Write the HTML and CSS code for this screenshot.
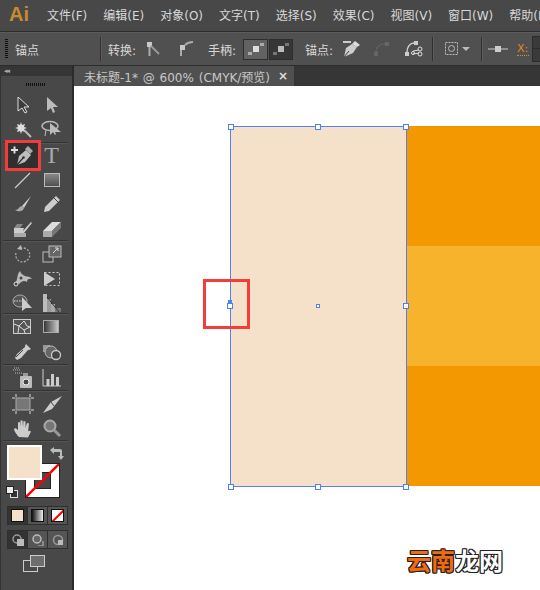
FILE: index.html
```html
<!DOCTYPE html>
<html lang="zh">
<head>
<meta charset="utf-8">
<title>Illustrator</title>
<link rel="stylesheet" href="styles.css">
</head>
<body>
<div class="app">
  <header class="menubar">
    <span class="logo">Ai</span>
    <nav class="menus">
      <span>文件(F)</span><span>编辑(E)</span><span>对象(O)</span><span>文字(T)</span><span>选择(S)</span><span>效果(C)</span><span>视图(V)</span><span>窗口(W)</span><span>帮助(H)</span>
    </nav>
  </header>

  <div class="controlbar">
    <span class="grip"></span>
    <span class="ctl-title">锚点</span>
    <span class="vsep first"></span>
    <span class="ctl-label">转换:</span>
    <svg class="ctl-icon i1" width="18" height="18" viewBox="0 0 18 18"><rect x="3" y="2" width="5" height="5" fill="#c8c8c8"/><path d="M5.500 7V16" stroke="#aaa" stroke-width="2"/><path d="M7 6l8 8" stroke="#999" stroke-width="2"/></svg>
    <svg class="ctl-icon i2" width="18" height="18" viewBox="0 0 18 18"><rect x="3" y="5" width="5" height="5" fill="#c8c8c8"/><path d="M4 16V10" stroke="#aaa" stroke-width="2"/><path d="M8 5C10 3 13 2 16 2" stroke="#aaa" stroke-width="2" fill="none"/></svg>
    <span class="ctl-label hand">手柄:</span>
    <span class="toggle on"><svg width="16" height="14" viewBox="0 0 16 14"><rect x="5" y="4" width="6" height="6" fill="#ddd"/><rect x="0" y="10" width="4" height="3" fill="#aaa"/><rect x="12" y="1" width="4" height="3" fill="#aaa"/></svg></span>
    <span class="toggle off"><svg width="16" height="14" viewBox="0 0 16 14"><rect x="5" y="4" width="6" height="6" fill="#bbb"/><rect x="0" y="10" width="4" height="3" fill="#777"/><rect x="12" y="1" width="4" height="3" fill="#777"/></svg></span>
    <span class="ctl-label anchor">锚点:</span>
    <svg class="ctl-icon i3" width="20" height="18" viewBox="0 0 20 18"><path d="M2 17l2-9 6-4 5 3-4 6z" fill="#ccc"/><path d="M13 1l5 4-3 2-5-3z" fill="#ddd"/><path d="M2 17l5-6" stroke="#444"/><path d="M1 2h8" stroke="#ccc" stroke-width="2"/></svg>
    <svg class="ctl-icon i4" width="18" height="18" viewBox="0 0 18 18"><rect x="1" y="12" width="4" height="4" fill="#666"/><rect x="12" y="2" width="4" height="4" fill="#666"/><path d="M3 12C3 7 7 4 12 4" stroke="#666" stroke-width="1.500" stroke-dasharray="2 1" fill="none"/></svg>
    <svg class="ctl-icon i5" width="20" height="18" viewBox="0 0 20 18"><rect x="1" y="12" width="4" height="4" fill="#ccc"/><rect x="10" y="1" width="4" height="4" fill="#ccc"/><path d="M3 12C3 7 6 3 10 3" stroke="#ccc" stroke-width="1.500" fill="none"/><circle cx="9" cy="13" r="1.500" fill="none" stroke="#ddd"/><circle cx="16" cy="14" r="2" fill="none" stroke="#ddd"/><circle cx="16" cy="9" r="2" fill="none" stroke="#ddd"/><path d="M9 11l6-1M9 14l6-1" stroke="#ddd"/></svg>
    <span class="vsep second"></span>
    <svg class="ctl-icon i6" width="30" height="14" viewBox="0 0 30 14"><rect x=".5" y=".5" width="12" height="12" fill="none" stroke="#bbb" stroke-dasharray="2 1"/><circle cx="6.500" cy="6.500" r="3" fill="none" stroke="#bbb"/><path d="M17 5h8l-4 4z" fill="#bbb"/></svg>
    <span class="vsep third"></span>
    <svg class="ctl-icon i7" width="20" height="8" viewBox="0 0 20 8"><path d="M0 4h20" stroke="#ccc"/><rect x="7" y="1" width="6" height="6" fill="#ccc"/></svg>
    <span class="xlabel">X:</span>
    <span class="spinner"><i></i></span>
  </div>

  <div class="workspace">
    <aside class="toolpanel">
      <div class="panel-head"><span class="arrows">◂◂</span></div>
      <div class="panel-grip"></div>

      <div class="tools g1">
        <svg width="20" height="20" viewBox="0 0 20 20"><path d="M5 2v14l4-3 3 5 2-1-3-5h5z" fill="#3b3b3b" stroke="#ddd"/></svg>
        <svg class="more" width="20" height="20" viewBox="0 0 20 20"><path d="M5 2v14l4-3 2 5 2-1-2-5h5z" fill="#bbb"/></svg>
        <svg width="22" height="20" viewBox="0 0 22 20"><path d="M9 3l1 3 3-1-1 3 3 1-3 1 1 3-3-1-1 3-1-3-3 1 1-3-3-1 3-1-1-3 3 1z" fill="#ddd"/><path d="M12 11l7 7" stroke="#bbb" stroke-width="2"/></svg>
        <svg class="more" width="22" height="20" viewBox="0 0 22 20"><ellipse cx="9" cy="7" rx="8" ry="4.500" fill="none" stroke="#bbb" stroke-width="1.500"/><path d="M9 4v12l3-3 2 3 1-1-1-2h6z" fill="#bbb"/><path d="M5 11l-1 6" stroke="#bbb"/></svg>
      </div>

      <div class="tools g2">
        <span class="tool-active"><svg width="26" height="22" viewBox="0 0 26 22"><path d="M1 6h7M4.500 2.500v7" stroke="#ddd" stroke-width="2"/><path d="M7 21l2-9 7-6 5 5-6 7z" fill="#bdbdbd"/><path d="M15 5l3-3 5 5-3 3z" fill="#aaa"/><path d="M7 21l6-7" stroke="#2f2f2f" stroke-width="1.200"/><circle cx="13.500" cy="13.500" r="1.300" fill="#2f2f2f"/></svg></span>
        <span class="type-tool">T</span>
        <svg class="more" width="20" height="20" viewBox="0 0 20 20"><path d="M2 18L17 3" stroke="#ccc" stroke-width="1.200"/></svg>
        <svg class="more" width="16" height="14" viewBox="0 0 16 14"><defs><linearGradient id="rg" x1="0" y1="0" x2="0" y2="1"><stop offset="0" stop-color="#8a8a8a"/><stop offset="1" stop-color="#4f4f4f"/></linearGradient></defs><rect x=".5" y=".5" width="15" height="13" fill="url(#rg)" stroke="#bbb"/></svg>
        <svg width="20" height="20" viewBox="0 0 20 20"><path d="M18 2L9 12l2 2z" fill="#ccc"/><path d="M9 12c-3 0-3 4-7 4 3 2 8 2 9-2z" fill="#aaa"/></svg>
        <svg class="more" width="20" height="20" viewBox="0 0 20 20"><path d="M14 2l4 4L7 17l-5 1 1-5z" fill="#ccc"/><path d="M12 4l4 4" stroke="#444"/></svg>
        <svg width="22" height="20" viewBox="0 0 22 20"><path d="M2 9h10l-1 3 8-9 1 1-8 10H2z" fill="#ccc"/><path d="M2 9l3-4h6l-3 4z" fill="#888"/><path d="M2 14h12v4H2z" fill="#aaa"/></svg>
        <svg class="more" width="22" height="20" viewBox="0 0 22 20"><path d="M2 12l9-9h9l-9 9z" fill="#ddd"/><path d="M2 12h9v6H2z" fill="#aaa"/><path d="M11 12l9-9v6l-9 9z" fill="#777"/></svg>
      </div>

      <div class="tools g3">
        <svg class="more" width="20" height="20" viewBox="0 0 20 20"><path d="M3 9a7 7 0 1 0 3-4" fill="none" stroke="#aaa" stroke-width="1.300" stroke-dasharray="2 1.500"/><path d="M8 1L4 5l5 1z" fill="#bbb"/></svg>
        <svg class="more" width="20" height="20" viewBox="0 0 20 20"><rect x="1" y="8" width="10" height="10" fill="none" stroke="#bbb"/><rect x="7" y="2" width="12" height="11" fill="#666" stroke="#bbb"/><path d="M11 9l5-5M13 4h3v3" stroke="#ddd" fill="none"/></svg>
        <svg class="more" width="22" height="20" viewBox="0 0 22 20"><path d="M4 13C6 9 5 5 8 2c1 3 3 4 5 5s5 0 7 3c-3-1-5 0-5 3-3-2-5-1-8 2" fill="#bbb"/><circle cx="4" cy="15" r="2" fill="none" stroke="#ddd"/><circle cx="9" cy="9" r="1.500" fill="#444"/></svg>
        <svg width="20" height="20" viewBox="0 0 20 20"><rect x="2.500" y="3.500" width="15" height="13" fill="none" stroke="#ccc" stroke-dasharray="2 2"/><path d="M2 3l11 7-11 7z" fill="#ccc"/></svg>
        <svg width="22" height="20" viewBox="0 0 22 20"><ellipse cx="8" cy="8" rx="7" ry="6" fill="#555" stroke="#aaa"/><path d="M2 8h9" stroke="#ddd" stroke-dasharray="1.500 1"/><path d="M10 4v14l4-3h6z" fill="#ccc"/></svg>
        <svg class="more" width="22" height="20" viewBox="0 0 22 20"><path d="M2 1h4v18H2z" fill="#bbb"/><path d="M6 6h4v13H6z" fill="#999"/><path d="M10 11h4v8h-4z" fill="#aaa"/><path d="M14 15h6v4h-6z" fill="#777"/><path d="M6 4l12 15" stroke="#333" fill="none"/></svg>
      </div>

      <div class="tools g4">
        <svg width="20" height="18" viewBox="0 0 20 18"><rect x=".5" y="1.500" width="17" height="14" fill="#555" stroke="#ccc"/><path d="M1 6l5 2 5-5 3 5 3 1M6 8l-1 7M6 8l5 4 1 3M11 12l6-3" stroke="#ddd" fill="none"/></svg>
        <svg width="18" height="14" viewBox="0 0 18 14"><defs><linearGradient id="gg"><stop offset="0" stop-color="#333"/><stop offset="1" stop-color="#ccc"/></linearGradient></defs><rect x=".5" y=".5" width="15" height="12" fill="url(#gg)" stroke="#aaa"/></svg>
        <svg class="more" width="20" height="20" viewBox="0 0 20 20"><path d="M13 2l5 5-2 1-1 0-7 8-4 2-2-2 2-4 8-7 0-1z" fill="#ccc"/><path d="M3 15l7-7" stroke="#444"/></svg>
        <svg width="22" height="20" viewBox="0 0 22 20"><rect x="2" y="3" width="7" height="7" fill="#999"/><circle cx="10" cy="10" r="6" fill="#666" stroke="#bbb"/><circle cx="15" cy="13" r="4.500" fill="#444" stroke="#ccc" stroke-width="1.300"/></svg>
      </div>

      <div class="tools g5">
        <svg class="more" width="22" height="22" viewBox="0 0 22 22"><path d="M1 3h8M3 6h8M2 1h6" stroke="#bbb" stroke-dasharray="1 1"/><rect x="8" y="9" width="12" height="12" rx="1" fill="#bbb"/><circle cx="14" cy="15" r="3" fill="#444" stroke="#eee"/><rect x="11" y="6" width="5" height="3" fill="#999"/></svg>
        <svg class="more" width="20" height="20" viewBox="0 0 20 20"><path d="M1 1v17h18" stroke="#ccc" fill="none"/><path d="M4.500 11h3v7h-3zM9 6h3v12H9zM14 9h3v9h-3z" fill="#ccc"/></svg>
      </div>

      <div class="tools g6">
        <svg width="22" height="20" viewBox="0 0 22 20"><rect x="4" y="4" width="14" height="12" fill="#777" stroke="#aaa"/><path d="M0 4h3M19 4h3M0 16h3M19 16h3M4 0v3M18 0v3M4 17v3M18 17v3" stroke="#ddd"/></svg>
        <svg class="more" width="20" height="20" viewBox="0 0 20 20"><path d="M20 2L9 8 1 19l9-4z" fill="#ccc"/><path d="M9 8l3 4" stroke="#444"/></svg>
        <svg class="more" width="20" height="20" viewBox="0 0 20 20"><path d="M6 18c-2-2-5-6-5-8l1.500-1L5 11V3.500l2-.5.500 5V1.500h2L10 8l.5-6 2 .5L12.500 9l1.500-5 2 .5-1 8 1-1 2 1-3 6z" fill="#ccc"/></svg>
        <svg width="20" height="20" viewBox="0 0 20 20"><circle cx="8" cy="7" r="5.500" fill="#777" stroke="#aaa" stroke-width="2"/><path d="M12 11l6 6" stroke="#999" stroke-width="3"/></svg>
      </div>

      <div class="colors">
        <span class="swap"><svg width="16" height="14" viewBox="0 0 16 14"><path d="M1 3l4-3v2h6a2 2 0 0 1 2 2v5h2l-3 4-3-4h2V5H5v2z" fill="#bbb"/></svg></span>
        <div class="swatches">
          <span class="stroke-swatch"><span class="stroke-hole"></span><svg class="slash" viewBox="0 0 34 34" preserveAspectRatio="none"><path d="M0 34L34 0" stroke="#f00" stroke-width="2.500"/></svg></span>
          <span class="fill-swatch"></span>
          <span class="defaults"><i class="d-back"></i><i class="d-front"></i></span>
        </div>
      </div>

      <div class="mode-row">
        <span class="mode active"><i class="m-fill"></i></span>
        <span class="mode"><i class="m-grad"></i></span>
        <span class="mode"><i class="m-none"><svg viewBox="0 0 12 12" width="12" height="12"><path d="M0 12L12 0" stroke="#f00" stroke-width="2"/></svg></i></span>
      </div>

      <div class="mode-row draw">
        <span class="mode active"><svg width="12" height="12" viewBox="0 0 12 12"><circle cx="5" cy="5" r="4" fill="none" stroke="#999" stroke-width="1.500"/><rect x="5" y="5" width="7" height="7" fill="#bbb"/></svg></span>
        <span class="mode"><svg width="12" height="12" viewBox="0 0 12 12"><circle cx="5" cy="5" r="4" fill="#666" stroke="#bbb" stroke-width="1.500"/><path d="M11 7v5H6" stroke="#bbb" fill="none"/></svg></span>
        <span class="mode"><svg width="12" height="12" viewBox="0 0 12 12"><circle cx="6" cy="6" r="4.500" fill="none" stroke="#999" stroke-width="1.500"/><rect x="6" y="6" width="5" height="5" fill="#bbb"/></svg></span>
      </div>

      <div class="screen-mode"><svg width="22" height="17" viewBox="0 0 22 17"><rect x=".5" y="5.500" width="14" height="11" fill="#4a4a4a" stroke="#ccc"/><rect x="7.500" y=".5" width="14" height="11" fill="#6e6e6e" stroke="#ccc"/></svg></div>
    </aside>

    <main class="document">
      <div class="tabbar">
        <div class="tab"><span>未标题-1* @ 600% (CMYK/预览)</span><b class="close">×</b></div>
      </div>
      <div class="canvas">
        <svg class="art" width="466" height="504" viewBox="0 0 466 504">
          <rect x="333" y="40" width="133" height="120" fill="#f39800"/>
          <rect x="333" y="160" width="133" height="120" fill="#f8b32c"/>
          <rect x="333" y="280" width="133" height="120" fill="#f39800"/>
          <rect x="156.500" y="40.500" width="176" height="360" fill="#f5e1ca" stroke="#5580ee"/>
          <g fill="#fff" stroke="#4f7ff0">
            <rect x="154.500" y="38.500" width="5" height="5"/><rect x="241.500" y="38.500" width="5" height="5"/><rect x="329.500" y="38.500" width="5" height="5"/>
            <rect x="329.500" y="217.500" width="5" height="5"/><rect x="154.500" y="398.500" width="5" height="5"/><rect x="241.500" y="398.500" width="5" height="5"/><rect x="329.500" y="398.500" width="5" height="5"/>
            <rect x="242.500" y="218.500" width="3" height="3"/><rect x="153.500" y="217.500" width="5" height="5"/>
          </g>
          <rect x="154" y="214" width="4" height="3" fill="#4f7ff0"/>
          <rect x="130.500" y="194.500" width="44" height="47" fill="none" stroke="#f43c3c" stroke-width="3"/>
        </svg>
        <div class="watermark"><em>云南</em>龙网</div>
      </div>
    </main>
  </div>
</div>
</body>
</html>
```

FILE: styles.css
```css
* { box-sizing: border-box; }
html, body { margin: 0; height: 100%; overflow: hidden; }
body { background: #484848; }
.app {
  width: 540px; height: 590px; display: flex; flex-direction: column;
  font-family: "DejaVu Sans", "Noto Sans CJK SC", sans-serif;
  font-size: 12px; color: #d8d8d8; background: #484848; overflow: hidden;
}

/* menu */
.menubar { height: 32px; flex: none; display: flex; align-items: center; background: #484848; border-bottom: 1px solid #2c2c2c; white-space: nowrap; overflow: hidden; }
.logo { width: 47px; padding-left: 9px; font: bold 20px "Liberation Sans", sans-serif; color: #c98a2e; position: relative; top: -1px; flex: none; }
.menus { display: flex; gap: 16px; flex: none; }
.menus span { display: block; line-height: 16px; }

/* control bar */
.controlbar { height: 34px; flex: none; display: flex; align-items: center; background: #505050; border-bottom: 1px solid #2c2c2c; border-top: 1px solid #5c5c5c; white-space: nowrap; padding-left: 5px; }
.grip { width: 3px; height: 20px; flex: none; background: repeating-linear-gradient(#111 0 1px, transparent 1px 2px); }
.ctl-title { margin-left: 7px; width: 85px; flex: none; }
.vsep { width: 1px; height: 24px; background: #303030; box-shadow: 1px 0 0 #5c5c5c; flex: none; }
.ctl-label { flex: none; width: 29px; }
.controlbar .first + .ctl-label { margin-left: 7px; }
.ctl-icon { flex: none; display: block; }
.i1 { margin-left: 7px; }
.i2 { margin-left: 15px; }
.hand { margin-left: 13px; }
.toggle { height: 21px; flex: none; display: flex; align-items: center; justify-content: center; }
.toggle.on { width: 25px; margin-left: 6px; background: #626262; border: 1px solid #2e2e2e; }
.toggle.off { width: 24px; margin-left: 1px; background: #363636; border: 1px solid #2e2e2e; }
.anchor { margin-left: 12px; }
.i3 { margin-left: 8px; }
.i4 { margin-left: 11px; }
.i5 { margin-left: 13px; }
.second { margin-left: 8px; }
.i6 { margin-left: 12px; }
.third { margin-left: 6px; }
.i7 { margin-left: 6px; }
.xlabel { margin-left: 9px; color: #e08a1e; border-bottom: 1px dotted #e08a1e; line-height: 13px; flex: none; width: 12px; font-size: 11px; }
.spinner { margin-left: 3px; width: 20px; height: 26px; flex: none; background: #3a3a3a; border: 1px solid #2c2c2c; position: relative; }
.spinner i { display: block; height: 12px; border-bottom: 1px solid #2c2c2c; }

/* workspace */
.workspace { flex: 1; min-height: 0; display: flex; }
.toolpanel { width: 74px; flex: none; background: #484848; border-right: 2px solid #2b2b2b; border-left: 1px solid #333; display: flex; flex-direction: column; }
.panel-head { height: 10px; background: #363636; color: #aaa; font-size: 7px; line-height: 10px; padding-left: 3px; letter-spacing: -1px; }
.panel-grip { height: 3px; margin: 7px 0 0 25px; width: 19px; background: repeating-linear-gradient(90deg, #111 0 1px, transparent 1px 2px); }
.tools { display: grid; grid-template-columns: 29px 29px; grid-auto-rows: 24.500px; justify-items: center; align-items: center; align-content: start; padding: 0 7px 0 5px; margin: 0 4px 0 2px; border-bottom: 1px solid #333; box-shadow: 0 1px 0 #555; }
.tools svg { display: block; }
.g1 { margin-top: 6px; height: 51px; padding-top: 1px; grid-auto-rows: 24px; }
.g2 { height: 98px; }
.g3 { height: 73px; padding-top: 1px; }
.g4 { height: 51px; padding-top: 1px; }
.g5 { height: 26px; grid-auto-rows: 25px; }
.g6 { height: 50px; grid-auto-rows: 25px; }
.tool-active { width: 30px; height: 25px; background: #2f2f2f; display: flex; align-items: center; justify-content: center; outline: 3px solid #f43c3c; }
.type-tool { font: 24px/24px "Liberation Serif", serif; color: #aaa; }

/* colour section */
.colors { position: relative; height: 60px; margin-top: 3px; }
.swatches { position: absolute; inset: 0; }
.fill-swatch { position: absolute; left: 6px; top: 1px; width: 35px; height: 35px; background: #f5e1ca; border: 2px solid #fff; }
.stroke-swatch { position: absolute; left: 24px; top: 19px; width: 35px; height: 35px; background: #fff; border: 1px solid #222; }
.stroke-hole { position: absolute; left: 8px; top: 8px; width: 17px; height: 17px; background: #484848; border: 1px solid #222; }
.slash { position: absolute; inset: 0; width: 100%; height: 100%; }
.defaults { position: absolute; left: 5px; top: 42px; width: 12px; height: 12px; }
.d-back { position: absolute; right: 0; bottom: 0; width: 8px; height: 8px; background: #333; border: 1px solid #ddd; }
.d-front { position: absolute; left: 0; top: 0; width: 8px; height: 8px; background: #eee; border: 1px solid #222; }
.swap { position: absolute; left: 48px; top: 3px; z-index: 1; }

.mode-row { display: flex; width: 61px; height: 19px; margin: 2px 0 0 6px; background: #2f2f2f; padding: 1px; gap: 1px; }
.mode-row.draw { margin-top: 5px; }
.mode { flex: 1; display: flex; align-items: center; justify-content: center; background: #555; }
.mode.active { background: #333; }
.mode i { display: block; width: 13px; height: 13px; border: 1px solid #111; }
.m-fill { background: #f5e1ca; }
.m-grad { background: linear-gradient(90deg, #111, #eee); }
.m-none { background: #fff; overflow: hidden; }
.m-none svg { display: block; }
.screen-mode { margin: 6px 0 0 22px; }
.screen-mode svg { display: block; }

/* document */
.document { flex: 1; min-width: 0; display: flex; flex-direction: column; }
.tabbar { height: 20px; flex: none; background: #363636; }
.tab { width: 220px; height: 20px; background: #505050; display: flex; align-items: center; padding: 0 6px 0 10px; white-space: nowrap; color: #c8c8c8; font-size: 12px; word-spacing: 1px; }
.tab span { flex: 1; }
.close { font-size: 12px; color: #ddd; }
.canvas { flex: 1; position: relative; background: #fff; overflow: hidden; }
.art { position: absolute; left: 0; top: 0; display: block; }
.watermark { position: absolute; left: 333px; top: 458px; font: bold 24px/32px "Noto Sans CJK SC", sans-serif; color: #fff; white-space: nowrap; text-shadow: -1px 0 #222, 1px 0 #222, 0 -1px #222, 0 1px #222, -1px -1px #222, 1px 1px #222, -1px 1px #222, 1px -1px #222; }
.watermark em { font-style: normal; color: #f26a0f; }
```
